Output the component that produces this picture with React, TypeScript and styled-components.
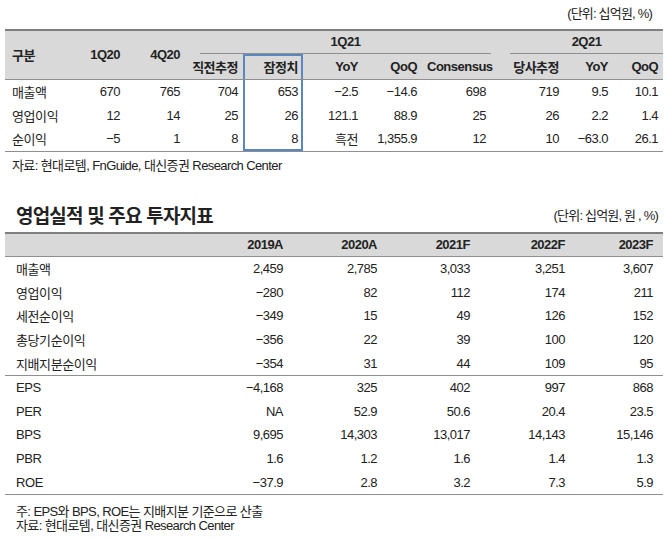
import React from 'react';
import styled, { createGlobalStyle, css } from 'styled-components';

const GlobalStyle = createGlobalStyle`
  body {
    margin: 0;
    background: #fff;
    color: #222;
    font-family: "Liberation Sans", "Noto Sans CJK KR", sans-serif;
  }
`;

const BLUE = '#5b87c0';
const LINE = '#8f8f8f';

type Box = 'top' | 'mid' | 'bottom';

const boxShadow = (box?: Box) => {
  if (!box) return '';
  const sides = [`inset 2px 0 0 ${BLUE}`, `inset -2px 0 0 ${BLUE}`];
  if (box === 'top') sides.push(`inset 0 2px 0 ${BLUE}`);
  if (box === 'bottom') sides.push(`inset 0 -2px 0 ${BLUE}`);
  return css`box-shadow: ${sides.join(', ')};`;
};

const Page = styled.div`
  width: 658px;
  padding: 0 5px;
  font-size: 13px;
  letter-spacing: -0.5px;
`;

const Unit = styled.div`
  height: 29px;
  line-height: 28px;
  text-align: right;
  padding-right: 11px;
  letter-spacing: -0.8px;
`;

const Table = styled.table`
  width: 100%;
  border-collapse: collapse;
  table-layout: fixed;
  border-top: 2px solid #7f7f7f;
  border-bottom: 1px solid ${LINE};
`;

const HeadRow = styled.tr<{ $h: number; $line?: boolean }>`
  height: ${p => p.$h}px;
  ${p => p.$line && css`border-bottom: 1px solid ${LINE};`}
`;

const Th = styled.th<{ $left?: number; $box?: Box; $pr?: number }>`
  background: #d9d9d9;
  font-weight: 700;
  text-align: ${p => (p.$left ? 'left' : 'right')};
  padding: 0 ${p => p.$pr ?? 5}px 0 ${p => p.$left ?? 5}px;
  white-space: nowrap;
  ${p => boxShadow(p.$box)}
`;

const GroupTh = styled.th`
  background: #d9d9d9;
  font-weight: 700;
  padding: 0;
  vertical-align: bottom;
`;

const GroupLabel = styled.div<{ $inset: number }>`
  margin-left: ${p => p.$inset}px;
  line-height: 22px;
  text-align: center;
  border-bottom: 1px solid ${LINE};
`;

const Row = styled.tr<{ $h: number; $divider?: boolean }>`
  height: ${p => p.$h}px;
  ${p => p.$divider && css`border-bottom: 1px solid ${LINE};`}
`;

const Label = styled.td<{ $pl: number }>`
  text-align: left;
  padding: 0 0 0 ${p => p.$pl}px;
  letter-spacing: -0.4px;
  white-space: nowrap;
`;

const Td = styled.td<{ $pr?: number; $box?: Box }>`
  text-align: right;
  padding: 0 ${p => p.$pr ?? 5}px 0 0;
  white-space: nowrap;
  ${p => boxShadow(p.$box)}
`;

const Note = styled.div<{ $pl: number; $mt: number }>`
  padding-left: ${p => p.$pl}px;
  margin-top: ${p => p.$mt}px;
  line-height: 14px;
  font-size: 13px;
  letter-spacing: -0.6px;
`;

const TitleBar = styled.div`
  display: flex;
  justify-content: space-between;
  align-items: center;
  height: 35px;
  margin-top: 24px;
  padding: 0 5px 0 11px;
  letter-spacing: -0.8px;
`;

const Title = styled.h2`
  margin: 0;
  font-size: 19px;
  font-weight: 700;
  letter-spacing: -0.8px;
`;

const quarterCols = [60, 60, 60, 58, 60, 60, 59, 69, 73, 49, 50];
const quarterRows = [
  ['매출액', '670', '765', '704', '653', '−2.5', '−14.6', '698', '719', '9.5', '10.1'],
  ['영업이익', '12', '14', '25', '26', '121.1', '88.9', '25', '26', '2.2', '1.4'],
  ['순이익', '−5', '1', '8', '8', '흑전', '1,355.9', '12', '10', '−63.0', '26.1'],
];

const annualCols = [188, 100, 94, 93, 95, 88];
const annualHead = ['2019A', '2020A', '2021F', '2022F', '2023F'];
const annualRows = [
  ['매출액', '2,459', '2,785', '3,033', '3,251', '3,607'],
  ['영업이익', '−280', '82', '112', '174', '211'],
  ['세전순이익', '−349', '15', '49', '126', '152'],
  ['총당기순이익', '−356', '22', '39', '100', '120'],
  ['지배지분순이익', '−354', '31', '44', '109', '95'],
  ['EPS', '−4,168', '325', '402', '997', '868'],
  ['PER', 'NA', '52.9', '50.6', '20.4', '23.5'],
  ['BPS', '9,695', '14,303', '13,017', '14,143', '15,146'],
  ['PBR', '1.6', '1.2', '1.6', '1.4', '1.3'],
  ['ROE', '−37.9', '2.8', '3.2', '7.3', '5.9'],
];

function App() {
  return (
    <Page>
      <GlobalStyle />
      <Unit>(단위: 십억원, %)</Unit>
      <Table>
        <colgroup>
          {quarterCols.map((w, i) => <col key={i} style={{ width: w }} />)}
        </colgroup>
        <thead>
          <HeadRow $h={23}>
            <Th rowSpan={2} $left={7}>구분</Th>
            <Th rowSpan={2}>1Q20</Th>
            <Th rowSpan={2}>4Q20</Th>
            <GroupTh colSpan={5}><GroupLabel $inset={15}>1Q21</GroupLabel></GroupTh>
            <GroupTh colSpan={3}><GroupLabel $inset={19}>2Q21</GroupLabel></GroupTh>
          </HeadRow>
          <HeadRow $h={25} $line>
            <Th>직전추정</Th>
            <Th $box="top">잠정치</Th>
            <Th>YoY</Th>
            <Th>QoQ</Th>
            <Th>Consensus</Th>
            <Th>당사추정</Th>
            <Th>YoY</Th>
            <Th>QoQ</Th>
          </HeadRow>
        </thead>
        <tbody>
          {quarterRows.map((r, ri) => (
            <Row key={r[0]} $h={24}>
              <Label $pl={7}>{r[0]}</Label>
              {r.slice(1).map((v, ci) => (
                <Td
                  key={ci}
                  $box={ci === 3 ? (ri === quarterRows.length - 1 ? 'bottom' : 'mid') : undefined}
                >
                  {v}
                </Td>
              ))}
            </Row>
          ))}
        </tbody>
      </Table>
      <Note $pl={7} $mt={7}>자료: 현대로템, FnGuide, 대신증권 Research Center</Note>

      <TitleBar>
        <Title>영업실적 및 주요 투자지표</Title>
        <span>(단위: 십억원, 원 , %)</span>
      </TitleBar>
      <Table>
        <colgroup>
          {annualCols.map((w, i) => <col key={i} style={{ width: w }} />)}
        </colgroup>
        <thead>
          <HeadRow $h={24} $line>
            <Th />
            {annualHead.map(h => <Th key={h} $pr={10}>{h}</Th>)}
          </HeadRow>
        </thead>
        <tbody>
          {annualRows.map((r, ri) => (
            <Row key={r[0]} $h={23.8} $divider={ri === 4}>
              <Label $pl={11}>{r[0]}</Label>
              {r.slice(1).map((v, ci) => <Td key={ci} $pr={10}>{v}</Td>)}
            </Row>
          ))}
        </tbody>
      </Table>
      <Note $pl={11} $mt={10}>주: EPS와 BPS, ROE는 지배지분 기준으로 산출</Note>
      <Note $pl={11} $mt={0}>자료: 현대로템, 대신증권 Research Center</Note>
    </Page>
  );
}

export default App;
